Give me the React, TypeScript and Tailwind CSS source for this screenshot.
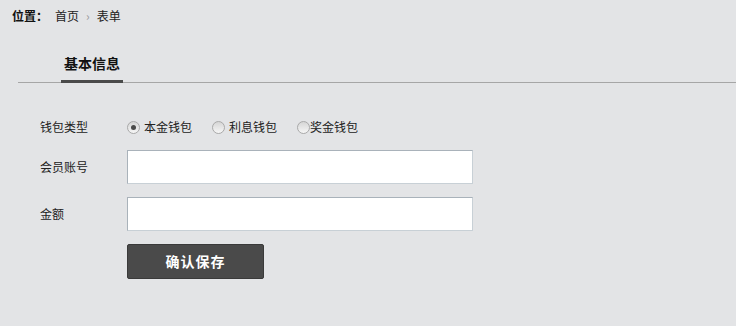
import React from 'react';

const FONT = { fontFamily: '"Noto Sans CJK SC", "Liberation Sans", sans-serif' };

function Radio({ checked, label, className }: { checked?: boolean; label: string; className?: string }) {
  return (
    <label className={`flex items-center ${className ?? ''}`}>
      <span className="flex h-[13px] w-[13px] items-center justify-center rounded-full border border-[#a9a9a9] bg-gradient-to-b from-[#d6d6d6] to-[#f6f6f6]">
        {checked && <span className="h-[5px] w-[5px] rounded-full bg-[#4a4a4a]" />}
      </span>
      <span className="text-[12px] text-[#222]">{label}</span>
    </label>
  );
}

export default function App() {
  return (
    <div className="h-[326px] w-[736px] overflow-hidden bg-[#e3e4e6] text-[#222]" style={FONT}>
      {/* breadcrumb */}
      <div className="flex h-[32px] items-center pl-[12px] text-[12px]">
        <span className="font-bold text-[#111]">位置：</span>
        <span className="ml-[7px]">首页</span>
        <span className="mx-[7px] text-[12px] text-[#999]">›</span>
        <span>表单</span>
      </div>

      {/* tabs */}
      <div className="ml-[18px] mt-[20px] flex border-b border-[#a6a6a6]">
        <div className="-mb-px ml-[43px] flex w-[62px] flex-col items-center">
          <span className="h-[22px] text-[14px] font-bold leading-[22px] text-[#111]">基本信息</span>
          <span className="mt-[6px] h-[3px] w-full bg-[#4a4a4a]" />
        </div>
      </div>

      {/* form */}
      <div className="mt-[29px] flex flex-col pl-[40px] text-[12px]">
        <div className="flex h-[30px] items-center">
          <span className="w-[87px]">钱包类型</span>
          <Radio checked label="本金钱包" className="gap-[4px]" />
          <Radio label="利息钱包" className="ml-[20px] gap-[4px]" />
          <Radio label="奖金钱包" className="ml-[20px] gap-0" />
        </div>
        <div className="mt-[8px] flex items-center">
          <span className="w-[87px]">会员账号</span>
          <input className="h-[34px] w-[346px] border border-[#c8d0d6] border-l-[#a9b2ba] border-t-[#a9b2ba] bg-white px-2 outline-none" />
        </div>
        <div className="mt-[13px] flex items-center">
          <span className="w-[87px]">金额</span>
          <input className="h-[34px] w-[346px] border border-[#c8d0d6] border-l-[#a9b2ba] border-t-[#a9b2ba] bg-white px-2 outline-none" />
        </div>
        <div className="mt-[13px] flex">
          <button className="ml-[87px] h-[35px] w-[137px] rounded-[2px] border border-[#3a3a3a] bg-[#4a4a4a] text-[14px] font-bold tracking-[1px] text-white">
            确认保存
          </button>
        </div>
      </div>
    </div>
  );
}
